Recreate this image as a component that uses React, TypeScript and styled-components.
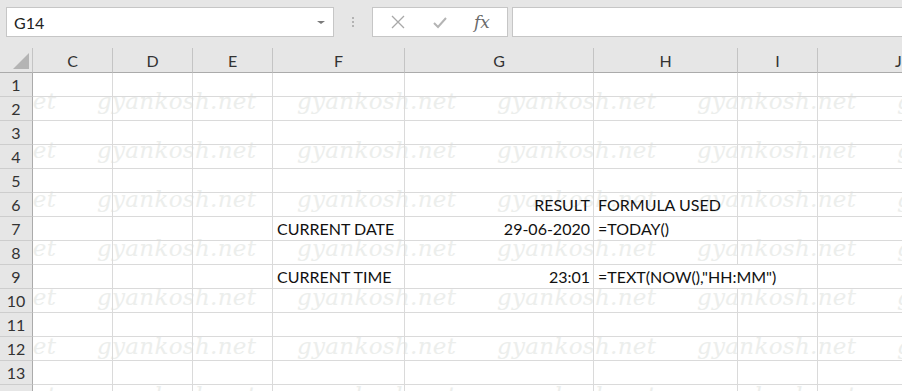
import React from 'react'
import styled, { createGlobalStyle } from 'styled-components'

const GlobalStyle = createGlobalStyle`
  html, body {
    margin: 0;
    padding: 0;
    background: #ffffff;
    overflow: hidden;
  }
  body {
    font-family: Lato, 'Liberation Sans', sans-serif;
  }
`

const Page = styled.div`
  width: 902px;
  height: 391px;
  overflow: hidden;
`

// formula bar
const Toolbar = styled.div`
  height: 48px;
  box-sizing: border-box;
  background: #e6e6e6;
  display: flex;
  align-items: flex-start;
  padding: 7px 0 0 6px;
`

const NameBox = styled.div`
  width: 328px;
  height: 30px;
  box-sizing: border-box;
  background: #fff;
  border: 1px solid #c6c6c6;
  display: flex;
  align-items: center;
  justify-content: space-between;
  padding: 0 8px 0 7px;
  font-size: 16px;
  color: #222;
`

const DropArrow = styled.span`
  width: 0;
  height: 0;
  border-left: 4px solid transparent;
  border-right: 4px solid transparent;
  border-top: 3px solid #7a7a7a;
`

const Grip = styled.div`
  width: 38px;
  height: 30px;
  display: flex;
  flex-direction: column;
  align-items: center;
  justify-content: center;
  gap: 2px;

  span {
    width: 2px;
    height: 2px;
    background: #b3b3b3;
  }
`

const FxBox = styled.div`
  width: 136px;
  height: 30px;
  box-sizing: border-box;
  background: #fff;
  border: 1px solid #c6c6c6;
  display: flex;
  align-items: center;
  justify-content: space-around;
  padding: 0 4px;
`

const FxText = styled.span`
  font-family: 'DejaVu Serif', 'Liberation Serif', serif;
  font-style: italic;
  font-size: 17px;
  color: #6a6a6a;
  line-height: 1;
`

const FormulaInput = styled.div`
  flex: 1;
  height: 30px;
  box-sizing: border-box;
  margin-left: 4px;
  background: #fff;
  border: 1px solid #c6c6c6;
  border-right: none;
`

// sheet
const cols = ['C', 'D', 'E', 'F', 'G', 'H', 'I', 'J']

const SheetWrap = styled.div`
  position: relative;
`

const Sheet = styled.div`
  display: grid;
  grid-template-columns: 33px 80px 80px 80px 132px 189px 144px 80px 162px;
  grid-template-rows: 25px;
  grid-auto-rows: 24px;
`

const Head = styled.div`
  position: relative;
  z-index: 2;
  background: #e6e6e6;
  box-sizing: border-box;
  display: flex;
  align-items: center;
  justify-content: center;
  font-size: 16px;
  color: #333;
`

const Corner = styled(Head)`
  border-right: 1px solid #c4c4c4;
  border-bottom: 1px solid #ababab;
  align-items: flex-end;
  justify-content: flex-end;
  padding: 0 3px 3px 0;

  &::after {
    content: '';
    width: 0;
    height: 0;
    border-left: 16px solid transparent;
    border-bottom: 16px solid #b4b4b4;
  }
`

const ColHead = styled(Head)`
  border-right: 1px solid #c4c4c4;
  border-bottom: 1px solid #ababab;
`

const RowHead = styled(Head)`
  border-right: 1px solid #ababab;
  border-bottom: 1px solid #cdcdcd;
`

const Cell = styled.div<{ $align?: 'left' | 'right'; $span?: number }>`
  position: relative;
  z-index: 1;
  grid-column: span ${(p) => p.$span ?? 1};
  border-right: 1px solid #dadada;
  border-bottom: 1px solid #dadada;
  box-sizing: border-box;
  display: flex;
  align-items: flex-end;
  justify-content: ${(p) => (p.$align === 'right' ? 'flex-end' : 'flex-start')};
  padding: 0 3px 3px 4px;
  font-size: 16px;
  line-height: 1;
  color: #111;
  white-space: nowrap;
`

const Watermark = styled.div`
  position: absolute;
  z-index: 0;
  top: 40px;
  left: -103px;
  display: flex;
  flex-direction: column;
  gap: 23px;
  pointer-events: none;
`

const MarkLine = styled.div`
  display: flex;
  height: 26px;
`

const Mark = styled.span`
  flex: none;
  width: 200px;
  font-family: 'DejaVu Serif', 'Liberation Serif', serif;
  font-style: italic;
  font-weight: 300;
  font-size: 23px;
  line-height: 26px;
  letter-spacing: 0.3px;
  color: #eceeec;
`

type CellData = { text: string; align?: 'left' | 'right'; span?: number }

const data: Record<number, Record<string, CellData>> = {
  6: {
    G: { text: 'RESULT', align: 'right' },
    H: { text: 'FORMULA USED' },
  },
  7: {
    F: { text: 'CURRENT DATE' },
    G: { text: '29-06-2020', align: 'right' },
    H: { text: '=TODAY()' },
  },
  9: {
    F: { text: 'CURRENT TIME' },
    G: { text: '23:01', align: 'right' },
    H: { text: '=TEXT(NOW(),"HH:MM")', span: 2 },
  },
}

const rows = Array.from({ length: 14 }, (_, i) => i + 1)

const renderRow = (r: number) => {
  const cells: React.ReactNode[] = []
  let skip = 0
  cols.forEach((c) => {
    if (skip > 0) {
      skip--
      return
    }
    const d = data[r]?.[c]
    if (d?.span) skip = d.span - 1
    cells.push(
      <Cell key={c} $align={d?.align} $span={d?.span}>
        {d?.text}
      </Cell>
    )
  })
  return [<RowHead key={`h${r}`}>{r}</RowHead>, ...cells]
}

const App = () => (
  <Page>
    <GlobalStyle />
    <Toolbar>
      <NameBox>
        G14
        <DropArrow />
      </NameBox>
      <Grip>
        <span />
        <span />
        <span />
      </Grip>
      <FxBox>
        <svg width="16" height="16" viewBox="0 0 16 16">
          <path d="M2 2 L14 14 M14 2 L2 14" stroke="#a8a8a8" strokeWidth="1.3" fill="none" />
        </svg>
        <svg width="16" height="16" viewBox="0 0 16 16">
          <path d="M2 9 L6 13 L14 4" stroke="#b4b4b4" strokeWidth="2" fill="none" />
        </svg>
        <FxText>fx</FxText>
      </FxBox>
      <FormulaInput />
    </Toolbar>
    <SheetWrap>
      <Sheet>
        <Corner />
        {cols.map((c) => (
          <ColHead key={c}>{c}</ColHead>
        ))}
        {rows.map(renderRow)}
      </Sheet>
      <Watermark>
        {Array.from({ length: 7 }, (_, i) => (
          <MarkLine key={i}>
            {Array.from({ length: 6 }, (_, j) => (
              <Mark key={j}>gyankosh.net</Mark>
            ))}
          </MarkLine>
        ))}
      </Watermark>
    </SheetWrap>
  </Page>
)

export default App
